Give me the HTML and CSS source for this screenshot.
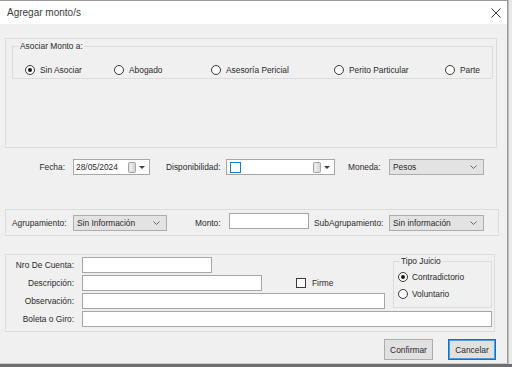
FILE: index.html
```html
<!DOCTYPE html>
<html lang="es">
<head>
  <meta charset="UTF-8" />
  <title>Agregar monto/s</title>
  <link rel="stylesheet" href="styles.css">
</head>
<body>
  <div class="screen">
    <div class="dialog">

      <!-- barra de titulo -->
      <div class="titlebar">
        <span class="title">Agregar monto/s</span>
        <svg class="close" width="10" height="10" viewBox="0 0 10 10">
          <path d="M0.5 0.5 L9.5 9.5 M9.5 0.5 L0.5 9.5" stroke="#333" stroke-width="1" fill="none" />
        </svg>
      </div>

      <div class="content">

        <!-- asociar monto -->
        <div class="panel panel-asociar">
          <fieldset class="group group-asociar">
            <legend>Asociar Monto a:</legend>
            <div class="radio-row">
              <label class="radio"><span class="mark checked"></span>Sin Asociar</label>
              <label class="radio"><span class="mark"></span>Abogado</label>
              <label class="radio"><span class="mark"></span>Asesoría Pericial</label>
              <label class="radio"><span class="mark"></span>Perito Particular</label>
              <label class="radio"><span class="mark"></span>Parte</label>
            </div>
          </fieldset>
        </div>

        <!-- fecha / disponibilidad / moneda -->
        <div class="row-fecha">
          <span class="lbl lbl-fecha">Fecha:</span>
          <div class="input date date-fecha">
            <span>28/05/2024</span>
            <svg class="cal" width="18" height="11" viewBox="0 0 18 11">
              <rect x="0.5" y="0.5" width="7" height="10" rx="1" fill="#d9d9d9" stroke="#a3a3a3" />
              <rect x="1.5" y="1.5" width="3" height="8" fill="#ececec" />
              <polygon points="11,4 17,4 14,7" fill="#2d4263" />
            </svg>
          </div>
          <span class="lbl lbl-disp">Disponibilidad:</span>
          <div class="input date date-disp">
            <span class="blue-check"></span>
            <svg class="cal" width="18" height="11" viewBox="0 0 18 11">
              <rect x="0.5" y="0.5" width="7" height="10" rx="1" fill="#d9d9d9" stroke="#a3a3a3" />
              <rect x="1.5" y="1.5" width="3" height="8" fill="#ececec" />
              <polygon points="11,4 17,4 14,7" fill="#2d4263" />
            </svg>
          </div>
          <span class="lbl lbl-moneda">Moneda:</span>
          <div class="combo combo-moneda">
            <span>Pesos</span>
            <svg width="7" height="4" viewBox="0 0 7 4"><polyline points="0.5,0.5 3.5,3.5 6.5,0.5" fill="none" stroke="#666" /></svg>
          </div>
        </div>

        <!-- agrupamiento -->
        <div class="panel panel-agrup">
          <span class="lbl lbl-agrup">Agrupamiento:</span>
          <div class="combo combo-agrup">
            <span>Sin Información</span>
            <svg width="7" height="4" viewBox="0 0 7 4"><polyline points="0.5,0.5 3.5,3.5 6.5,0.5" fill="none" stroke="#666" /></svg>
          </div>
          <span class="lbl lbl-monto">Monto:</span>
          <div class="input monto"></div>
          <span class="lbl lbl-sub">SubAgrupamiento:</span>
          <div class="combo combo-sub">
            <span>Sin información</span>
            <svg width="7" height="4" viewBox="0 0 7 4"><polyline points="0.5,0.5 3.5,3.5 6.5,0.5" fill="none" stroke="#666" /></svg>
          </div>
        </div>

        <!-- cuenta y descripcion -->
        <div class="panel panel-cuenta">
          <div class="cuenta-top">
            <div class="fields">
              <div class="field-row">
                <span class="lbl lbl-field">Nro De Cuenta:</span>
                <div class="input w-cuenta"></div>
              </div>
              <div class="field-row">
                <span class="lbl lbl-field">Descripción:</span>
                <div class="input w-desc"></div>
                <label class="check"><span class="box"></span>Firme</label>
              </div>
              <div class="field-row">
                <span class="lbl lbl-field">Observación:</span>
                <div class="input w-obs"></div>
              </div>
            </div>
            <fieldset class="group group-juicio">
              <legend>Tipo Juicio</legend>
              <label class="radio"><span class="mark checked"></span>Contradictorio</label>
              <label class="radio"><span class="mark"></span>Voluntario</label>
            </fieldset>
          </div>
          <div class="field-row">
            <span class="lbl lbl-field">Boleta o Giro:</span>
            <div class="input w-boleta"></div>
          </div>
        </div>

        <!-- botones -->
        <div class="actions">
          <button class="btn">Confirmar</button>
          <button class="btn btn-default">Cancelar</button>
        </div>

      </div>
    </div>
    <div class="edge"></div>
  </div>
</body>
</html>
```

FILE: styles.css
```css
html, body {
  margin: 0;
  padding: 0;
}

body {
  background-color: #6f6f6f;
  font-family: 'Liberation Sans', Arial, sans-serif;
  font-size: 8.4px;
  color: #2b2b2b;
}

.screen {
  display: flex;
  width: 512px;
  height: 364px;
}

.dialog {
  width: 508px;
  height: 364px;
  box-sizing: border-box;
  border-top: 1px solid #9b9b9b;
  border-right: 1px solid #9b9b9b;
  border-bottom: 1px solid #cdcdcd;
  background-color: #f0f0f0;
  display: flex;
  flex-direction: column;
}

.edge {
  width: 4px;
  height: 364px;
  background-color: #e9e9e9;
  border-left: 1px solid #bcbcbc;
  box-sizing: border-box;
}

/* barra de titulo */
.titlebar {
  height: 23px;
  background-color: #fff;
  display: flex;
  align-items: center;
  justify-content: space-between;
  padding: 0 6px 0 7px;
}

.title {
  font-size: 10px;
  color: #3a3a3a;
}

/* paneles */
.panel {
  border: 1px solid #dcdcdc;
  box-sizing: border-box;
  margin-left: 5px;
}

.group {
  border: 1px solid #dcdcdc;
  margin: 0;
  min-width: 0;
  box-sizing: border-box;
}

.group legend {
  padding: 0 1px;
  line-height: 10px;
}

.panel-asociar {
  margin-top: 14px;
  width: 492px;
  height: 110px;
  padding: 2px 4px 0 6px;
}

.group-asociar {
  width: 481px;
  height: 38px;
  padding: 0 0 0 12px;
}

.group-asociar legend {
  margin-left: -6px;
}

.radio-row {
  display: grid;
  grid-template-columns: 89px 97px 123px 111px auto;
  margin-top: 13px;
}

.radio {
  display: flex;
  align-items: center;
  gap: 5px;
  height: 11px;
}

.mark {
  width: 10px;
  height: 10px;
  box-sizing: border-box;
  border: 1px solid #3a3a3a;
  border-radius: 50%;
  background-color: #fff;
  display: flex;
  align-items: center;
  justify-content: center;
}

.mark.checked::after {
  content: '';
  width: 4px;
  height: 4px;
  border-radius: 50%;
  background-color: #1a1a1a;
}

/* controles */
.lbl {
  white-space: nowrap;
}

.input {
  height: 16px;
  box-sizing: border-box;
  border: 1px solid #a6a6a6;
  background-color: #fff;
}

.combo {
  height: 16px;
  box-sizing: border-box;
  border: 1px solid #adadad;
  background-color: #e3e3e3;
  display: flex;
  align-items: center;
  justify-content: space-between;
  padding: 0 6px 0 3px;
}

.date {
  display: flex;
  align-items: center;
  justify-content: space-between;
  padding: 0 3px 0 2px;
}

.blue-check {
  width: 9px;
  height: 9px;
  border: 1px solid #1b7ad6;
  background-color: #fff;
  margin-left: 1px;
}

/* fila fecha */
.row-fecha {
  display: flex;
  align-items: center;
  margin-top: 11px;
  height: 16px;
}

.lbl-fecha {
  width: 65px;
  text-align: right;
  margin-right: 8px;
}

.date-fecha {
  width: 77px;
}

.lbl-disp {
  width: 60px;
  margin-left: 16px;
}

.date-disp {
  width: 109px;
}

.lbl-moneda {
  width: 41px;
  margin-left: 13px;
}

.combo-moneda {
  width: 95px;
}

/* agrupamiento */
.panel-agrup {
  margin-top: 34px;
  width: 494px;
  height: 27px;
  display: flex;
  align-items: center;
  padding-left: 6px;
}

.lbl-agrup {
  width: 61px;
}

.combo-agrup {
  width: 94px;
}

.lbl-monto {
  width: 34px;
  margin-left: 28px;
}

.monto {
  width: 80px;
  margin-bottom: 4px;
}

.lbl-sub {
  width: 75px;
  margin-left: 5px;
}

.combo-sub {
  width: 95px;
}

/* cuenta */
.panel-cuenta {
  margin-top: 18px;
  width: 490px;
  height: 78px;
  padding: 2px 0 0 0;
}

.cuenta-top {
  display: flex;
  align-items: flex-start;
}

.fields {
  width: 379px;
  display: flex;
  flex-direction: column;
  gap: 2px;
}

.field-row {
  display: flex;
  align-items: center;
  height: 16px;
}

.panel-cuenta > .field-row {
  margin-top: 2px;
}

.lbl-field {
  width: 68px;
  text-align: right;
  margin-right: 8px;
}

.w-cuenta { width: 130px; }
.w-desc { width: 180px; }
.w-obs { width: 303px; }
.w-boleta { width: 410px; }

.check {
  display: flex;
  align-items: center;
  gap: 6px;
  margin-left: 34px;
}

.check .box {
  width: 10px;
  height: 10px;
  box-sizing: border-box;
  border: 1px solid #3a3a3a;
  background-color: #fff;
}

.group-juicio {
  width: 99px;
  height: 52px;
  margin: -1px 0 0 8px;
  padding: 5px 0 0 4px;
  display: flex;
  flex-direction: column;
  gap: 6px;
}

.group-juicio legend {
  margin-left: 2px;
}

.group-juicio .radio {
  gap: 4px;
}

/* botones */
.actions {
  display: flex;
  justify-content: flex-end;
  gap: 15px;
  margin-top: 7px;
  padding-right: 11px;
}

.btn {
  width: 49px;
  height: 21px;
  padding: 0;
  font-family: 'Liberation Sans', Arial, sans-serif;
  font-size: 8.4px;
  color: #2b2b2b;
  background-color: #e1e1e1;
  border: 1px solid #adadad;
}

.btn-default {
  width: 48px;
  border-color: #0078d7;
  box-shadow: inset 0 0 0 1px #4d9be0;
}
```
